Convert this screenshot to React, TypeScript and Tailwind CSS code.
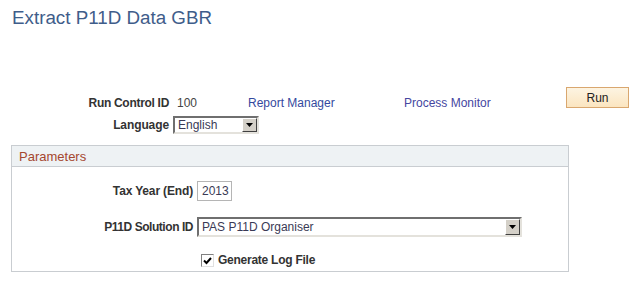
import React from 'react';

const font = { fontFamily: '"Liberation Sans", Arial, sans-serif' };

const DropArrow: React.FC = () => (
  <div className="flex h-full w-[15px] shrink-0 items-center justify-center border border-t-[#ffffff] border-l-[#ffffff] border-b-[#404040] border-r-[#404040] bg-[#d4d0c8]">
    <svg width="7" height="4" viewBox="0 0 7 4">
      <path d="M0 0h7L3.5 4z" fill="#000" />
    </svg>
  </div>
);

const Select: React.FC<{ value: string; className: string }> = ({ value, className }) => (
  <div
    className={`flex border-2 border-t-[#6f6f6f] border-l-[#6f6f6f] border-b-[#e4e2dc] border-r-[#e4e2dc] bg-white ${className}`}
  >
    <div className="flex flex-1 items-center overflow-hidden whitespace-nowrap pl-[3px] text-[12px] leading-[14px] text-[#3a3a55]">
      {value}
    </div>
    <DropArrow />
  </div>
);

const App: React.FC = () => {
  return (
    <div className="h-[281px] w-[639px] bg-white text-[12px] text-[#333333]" style={font}>
      {/* Title */}
      <div className="pl-[12px] pt-[7px]">
        <h1 className="text-[18.8px] leading-[22px] text-[#3f5d8a]">Extract P11D Data GBR</h1>
      </div>

      {/* Run control row */}
      <div className="mt-[58px] flex h-[21px] items-start">
        <div className="w-[169px] pt-[9px] text-right font-bold leading-[15px] tracking-[-0.3px]">Run Control ID</div>
        <div className="ml-[8px] w-[71px] pt-[9px] leading-[15px] text-[#444444]">100</div>
        <div className="w-[156px] pt-[9px] leading-[15px] text-[#34499e]">Report Manager</div>
        <div className="w-[162px] pt-[9px] leading-[15px] text-[#45469f]">Process Monitor</div>
        <button className="h-[21px] w-[63px] border border-[#d9a76f] bg-gradient-to-b from-[#fdf4e2] to-[#fbe5c0] text-[12px] leading-[14px] text-[#222222]">
          Run
        </button>
      </div>

      {/* Language row */}
      <div className="mt-[8px] flex h-[18px] items-center">
        <div className="w-[169px] text-right font-bold leading-[15px] tracking-[-0.1px]">Language</div>
        <Select value="English" className="ml-[4px] h-[18px] w-[86px]" />
      </div>

      {/* Parameters group box */}
      <div className="ml-[11px] mt-[11px] w-[558px] border border-[#c9cdd1]">
        <div className="flex h-[21px] items-center border-b border-[#c9cdd1] bg-[#eef2f4] pl-[7px] text-[13px] leading-[15px] text-[#a5472f]">
          Parameters
        </div>
        <div className="pb-[4px] pt-[14px]">
          <div className="flex h-[20px] items-center">
            <div className="w-[181px] text-right font-bold leading-[15px] tracking-[-0.15px]">Tax Year (End)</div>
            <div className="ml-[4px] flex h-[20px] w-[35px] items-center border border-[#b5b5b5] pl-[4px] leading-[14px] text-[#3a3a55]">
              2013
            </div>
          </div>
          <div className="mt-[16px] flex h-[20px] items-center">
            <div className="w-[181px] text-right font-bold leading-[15px] tracking-[-0.45px]">P11D Solution ID</div>
            <Select value="PAS P11D Organiser" className="ml-[4px] h-[20px] w-[325px]" />
          </div>
          <div className="mt-[17px] flex h-[13px] items-center">
            <div className="ml-[189px] flex h-[13px] w-[13px] items-center justify-center border border-t-[#808080] border-l-[#808080] border-b-[#e0e0e0] border-r-[#e0e0e0] bg-white">
              <svg width="9" height="8" viewBox="0 0 9 8">
                <path d="M1 3.5l2.5 2.5L8 1" stroke="#000" strokeWidth="2" fill="none" />
              </svg>
            </div>
            <div className="ml-[4px] font-bold leading-[15px] tracking-[-0.25px]">Generate Log File</div>
          </div>
        </div>
      </div>
    </div>
  );
};

export default App;
